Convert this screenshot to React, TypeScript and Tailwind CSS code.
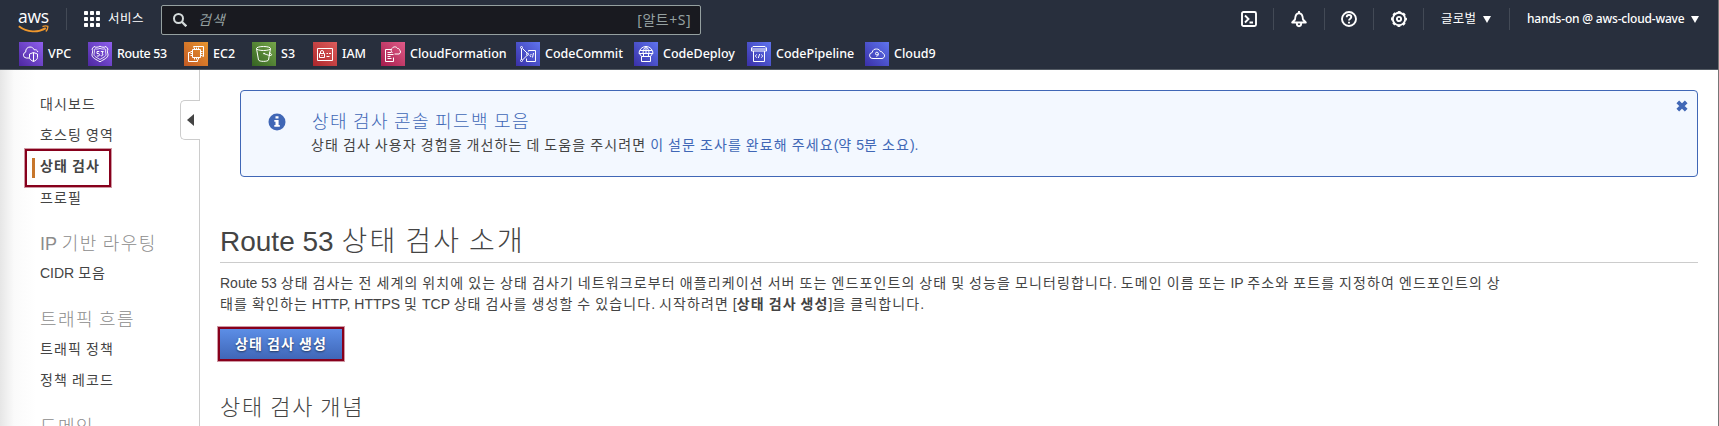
import React from "react";

const ko = "font-['Liberation_Sans','Noto_Sans_CJK_KR',sans-serif]";
const ember = "font-['Noto_Sans','Noto_Sans_CJK_KR',sans-serif]";

/** Widens Hangul runs slightly while leaving Latin text at its natural spacing. */
function Ko({ children }: { children: string }) {
  const runs = children.split(/([\uac00-\ud7a3]+)/);
  return (
    <>
      {runs.map((run, i) =>
        i % 2 === 1 ? (
          <span key={i} className="tracking-[0.08em]">
            {run}
          </span>
        ) : (
          run
        ),
      )}
    </>
  );
}

const violet = "from-[#4d27a0] to-[#8f5fee]";
const indigo = "from-[#3a2fa8] to-[#5f74ee]";

type Service = { name: string; width: string; tile: string; icon: React.ReactNode; text?: string };

const services: Service[] = [
  {
    name: "VPC",
    width: "w-[69px]",
    tile: violet,
    icon: (
      <>
        <path d="M10.500 16H7.300a3 3 0 0 1-.6-5.900C6.500 7 8.500 5 11 5c2.200 0 3.500 1.200 4.200 2.800 1.800-.4 3.300.5 3.600 2.200" />
        <path d="M14.500 10.500l4 1.500v3.500c0 1.800-1.700 3-4 4-2.300-1-4-2.200-4-4V12zM14.500 10.500v9" />
      </>
    ),
  },
  {
    name: "Route 53",
    width: "w-[96px]",
    tile: violet,
    text: "tracking-[-0.4px]",
    icon: (
      <>
        <path d="M6 4.500c2 1.200 4 .8 6-.3 2 1.100 4 1.500 6 .3l2 2.500c-1.200 2.200-.3 3.800 0 5.500.4 3.500-4.500 5-8 7.300-3.500-2.300-8.400-3.800-8-7.300.3-1.700 1.200-3.300 0-5.500z" />
        <path d="M7 6.800c1.700.6 3.400.2 5-.5 1.600.7 3.300 1.100 5 .5l.8 1c-.6 1.800 0 3 .2 4.500.2 2.400-3.500 3.500-6 5.200-2.500-1.700-6.200-2.800-6-5.200.2-1.500.8-2.700.2-4.500z" strokeWidth="0.800" />
        <path d="M11.300 9.500H9v2h1.200a1.200 1.200 0 0 1 0 2.500H8.800M12.800 9.500h2.500l-1.300 1.800a1.300 1.300 0 1 1-1.300 2.200" />
      </>
    ),
  },
  {
    name: "EC2",
    width: "w-[68px]",
    tile: "from-[#c25a24] to-[#e9962f]",
    icon: (
      <>
        <path d="M8.500 7.500h8v8h-8zM10.500 7.500v-2M12.500 7.500v-2M14.500 7.500v-2M16.500 9.500h2M16.500 11.500h2M16.500 13.500h2M10.500 15.500v2M12.500 15.500v2M14.500 15.500v2M8.500 9.500h-2M8.500 11.500h-2M8.500 13.500h-2" />
        <path d="M9.500 5.500v-1h10v10h-1M6.500 10.500h-2v9h9v-2" />
      </>
    ),
  },
  {
    name: "S3",
    width: "w-[61px]",
    tile: "from-[#356422] to-[#75a64a]",
    icon: (
      <>
        <ellipse cx="11.500" cy="6.500" rx="7" ry="2" />
        <path d="M4.500 6.500l2 11.500c.5 1.800 9.500 1.800 10 0l2-11.500M12 11.500c3 1.500 6 2.300 7.300 1.800 1-.8-.3-1.800-2.300-2.600" />
        <circle cx="12" cy="11.500" r=".5" />
      </>
    ),
  },
  {
    name: "IAM",
    width: "w-[68px]",
    tile: "from-[#ad262b] to-[#dd5c5c]",
    icon: (
      <>
        <path d="M4.500 6.500h15v12h-15zM6.500 11.500h5v4h-5zM7.500 11.500v-1.500a1.500 1.500 0 0 1 3 0v1.500M9 13v1M13.500 11.500h1.500M16 11.500h2M13.500 14.500h3" />
      </>
    ),
  },
  {
    name: "CloudFormation",
    width: "w-[135px]",
    tile: "from-[#a51a4d] to-[#e05a88]",
    icon: (
      <>
        <path d="M10.500 7.500h-6v12h8v-4M6.500 10.500h4M6.500 12.500h6M6.500 14.500h3M6.500 16.500h4" />
        <path d="M11.500 10.500a2.500 2.500 0 0 1 0-4.500c1-1.500 4-1.700 5 .5 1.500-.2 2 .8 2 1.500 1.500.8 1.300 3.500-.5 4h-4.500" />
      </>
    ),
  },
  {
    name: "CodeCommit",
    width: "w-[118px]",
    tile: indigo,
    icon: (
      <>
        <path d="M5.500 6.500v11M6.500 6.500l5 5M6.500 18l5-5" />
        <circle cx="5.500" cy="5.500" r="1" />
        <circle cx="5.500" cy="18.500" r="1" />
        <circle cx="11.500" cy="12.200" r="1" />
        <path d="M12.500 9.500v-1h7v11h-9v-3M15.500 12l-1.500 1.500 1 1.500M17.500 11l-1 4.500" />
      </>
    ),
  },
  {
    name: "CodeDeploy",
    width: "w-[113px]",
    tile: indigo,
    icon: (
      <>
        <path d="M5 11.500a7 7 0 0 1 14 0zM9 11.500c0-3.500 1.500-6 3-7 1.500 1 3 3.500 3 7M12 4.500v7M6 8.500h12" />
        <path d="M5.500 11.500l2 3M18.500 11.500l-2 3M9.500 11.500v3M14.500 11.500v3M7.500 14.500h9v5h-9z" />
      </>
    ),
  },
  {
    name: "CodePipeline",
    width: "w-[118px]",
    tile: indigo,
    icon: (
      <>
        <path d="M6 4.500h12l1.500 1.500v3h-15V6zM5 7h14M6.500 9v10.500h11V9" />
        <path d="M9.800 12.500L8.200 14l1.600 1.600M14.200 12.500l1.600 1.500-1.600 1.600M12.700 12l-1.400 4" />
      </>
    ),
  },
  {
    name: "Cloud9",
    width: "w-[80px]",
    tile: indigo,
    icon: (
      <>
        <path d="M8 16.500a3 3 0 0 1-.8-6C7.500 8 9.500 6.800 11.500 7c2 0 3.200 1 3.800 2.500 1.500-.2 2 .6 2.200 1.500 3 1 2.500 5.200-.5 5.500z" />
        <path d="M13.300 11.500a1.400 1.400 0 1 1-1.400-1.300 1.400 1.400 0 0 1 1.400 1.300c0 1.800-.6 2.700-1.800 3" />
      </>
    ),
  },
];

function AwsLogo() {
  return (
    <div className="flex w-[31px] flex-col items-center">
      <span className="mt-[4px] block h-[17px] font-['Open_Sans',sans-serif] text-[17.500px] leading-[17px] font-medium tracking-[-0.2px] text-white">
        aws
      </span>
      <svg viewBox="0 0 31 9" className="h-[9px] w-[31px]" fill="none" stroke="#f0982d">
        <path d="M.8 1.200c8.500 6.300 19 6.800 27 1.900" strokeWidth="1.900" />
        <path d="M24.500 1.600c2-.9 4-.9 5.300-.3.200 1.700-.5 3.800-2 5.200" strokeWidth="1.300" />
      </svg>
    </div>
  );
}

function Grid() {
  return (
    <svg viewBox="0 0 16 16" className="size-4" fill="#fff">
      {[0, 6, 12].map((y) =>
        [0, 6, 12].map((x) => <rect key={`${x}-${y}`} x={x} y={y} width="4" height="4" rx="0.8" />),
      )}
    </svg>
  );
}

function Caret() {
  return (
    <svg viewBox="0 0 8 7" className="h-[7px] w-[8px]" fill="#fff">
      <path d="M0 0h8L4 7z" />
    </svg>
  );
}

const tools = [
  {
    id: "shell",
    box: "w-[50px]",
    icon: (
      <>
        <rect x="1" y="1" width="14" height="14" rx="1.500" />
        <path d="M4 4.500L7.500 8 4 11.500M8.500 11.500H12" />
      </>
    ),
  },
  {
    id: "bell",
    box: "w-[51px]",
    icon: (
      <>
        <path d="M1.200 11.500L4 8.500C4.200 5 5.200 2.200 8 2.200s3.800 2.800 4 6.300l2.800 3z" strokeLinejoin="round" />
        <path d="M8 0v2.500M5.900 12v1.100a2.100 2.100 0 0 0 4.200 0V12" />
      </>
    ),
  },
  {
    id: "help",
    box: "w-[49px]",
    icon: (
      <>
        <circle cx="8" cy="8" r="7" />
        <path d="M5.700 6.200C5.700 4.800 6.700 4 8 4s2.300.8 2.300 2.100C10.300 7.700 8 7.700 8 9.500M8 10.700v1.800" />
      </>
    ),
  },
  {
    id: "settings",
    box: "w-[50px]",
    icon: (
      <>
        <circle cx="8" cy="8" r="6.200" />
        <circle cx="8" cy="8" r="7.200" strokeWidth="1.500" strokeDasharray="2.900 2.755" strokeDashoffset="1.450" />
        <circle cx="8" cy="8" r="2.100" />
      </>
    ),
  },
];

function Header() {
  return (
    <header className={`h-[70px] border-b border-[#545b64] bg-[#282f3d] text-white ${ember}`}>
      <div className="flex h-[40px] items-start">
        <div className="mt-[8px] flex h-[22px] w-[67px] justify-start border-r border-[#434a56] pl-[18px]">
          <div className="-mt-[4px]">
            <AwsLogo />
          </div>
        </div>
        <div className="flex h-[38px] w-[94px] items-center pl-[17px]">
          <Grid />
          <span className="ml-[8px] text-[12.500px] leading-[16px] tracking-[0.5px]">서비스</span>
        </div>
        <div className="mt-[5px] flex h-[30px] w-[540px] items-center rounded-[2px] border border-[#95a0a0] bg-[#191a20] pr-[9px] pl-[11px]">
          <svg viewBox="0 0 14 14" className="size-[14px]" fill="none" stroke="#d5dbdb" strokeWidth="2">
            <circle cx="5.500" cy="5.500" r="4.500" />
            <path d="M9 9l4.300 4.300" strokeWidth="2.300" />
          </svg>
          <span className="ml-[11px] flex-1 text-[14px] leading-[18px] tracking-[0.9px] text-[#95a0a0] italic">검색</span>
          <span className="text-[14px] leading-[18px] tracking-[0.5px] text-[#95a0a0]">[알트+S]</span>
        </div>
        <div className="mt-[8px] ml-auto flex h-[22px] items-center pr-[19px]">
          {tools.map((t) => (
            <div key={t.id} className={`flex h-[22px] items-center justify-center border-r border-[#434a56] ${t.box}`}>
              <svg viewBox="0 0 16 16" className="size-4 overflow-visible" fill="none" stroke="#fff" strokeWidth="1.900">
                {t.icon}
              </svg>
            </div>
          ))}
          <div className="flex h-[22px] w-[86px] items-center border-r border-[#434a56] pl-[17px] text-[12.500px] leading-[16px]">
            <span className="w-[42px] tracking-[0.3px] whitespace-nowrap">글로벌</span>
            <Caret />
          </div>
          <div className="flex h-[22px] items-center pl-[17px] text-[12px] leading-[16px] font-medium">
            <span className="w-[164px] tracking-[-0.190px] whitespace-nowrap">hands-on @ aws-cloud-wave</span>
            <Caret />
          </div>
        </div>
      </div>
      <nav className="flex pt-[2px] pl-[19px]">
        {services.map((s) => (
          <a key={s.name} className={`flex h-6 shrink-0 items-center gap-[5px] ${s.width}`}>
            <span className={`block size-6 shrink-0 bg-linear-to-tr ${s.tile}`}>
              <svg viewBox="0 0 24 24" className="size-6" fill="none" stroke="#fff" strokeWidth="1">
                {s.icon}
              </svg>
            </span>
            <span className={`text-[12.500px] leading-[16px] font-medium whitespace-nowrap ${s.text ?? ""}`}>{s.name}</span>
          </a>
        ))}
      </nav>
    </header>
  );
}

function SideLink({ children }: { children: string }) {
  return (
    <a className="block h-[31.300px] text-[14px] leading-[31px]">
      <Ko>{children}</Ko>
    </a>
  );
}

function SideHeading({ children }: { children: string }) {
  return (
    <h4 className="mt-[13px] h-[31.300px] text-[18px] leading-[34px] font-light text-[#8c8c8c]">
      <Ko>{children}</Ko>
    </h4>
  );
}

function Sidebar() {
  return (
    <aside className="relative w-[200px] shrink-0 border-r border-[#ccc] bg-linear-to-r from-[#e6e6e6] via-[#fafafa] via-[14px] to-white to-[36px] pt-[19px] pl-[40px]">
      <SideLink>대시보드</SideLink>
      <SideLink>호스팅 영역</SideLink>
      <div className="relative -top-px">
        <div className="absolute -top-[2px] -left-[15px] h-[38px] w-[86px] border-[2.500px] border-[#87001c] outline outline-[#87001c]/40" />
        <div className="absolute top-[7px] -left-[8px] h-[20px] w-[3px] bg-[#c7762b]" />
        <div className="font-bold">
          <SideLink>상태 검사</SideLink>
        </div>
      </div>
      <SideLink>프로필</SideLink>
      <SideHeading>IP 기반 라우팅</SideHeading>
      <SideLink>CIDR 모음</SideLink>
      <SideHeading>트래픽 흐름</SideHeading>
      <SideLink>트래픽 정책</SideLink>
      <SideLink>정책 레코드</SideLink>
      <SideHeading>도메인</SideHeading>
      <button className="absolute top-[30px] -right-px flex h-[40px] w-[20px] items-center rounded-l-[5px] border border-r-0 border-[#ccc] bg-white pl-[6px]">
        <svg viewBox="0 0 7 12" className="h-[12px] w-[7px]" fill="#444">
          <path d="M7 0v12L0 6z" />
        </svg>
      </button>
    </aside>
  );
}

function Notice() {
  return (
    <section className="mr-[20px] ml-[40px] flex h-[87px] rounded-[4px] border border-[#4067b6] bg-[#f3f8ff]">
      <svg viewBox="0 0 18 18" className="mt-[22px] ml-[27px] size-[18px]">
        <circle cx="9" cy="9" r="8.500" fill="#4067b6" />
        <path d="M7.500 3.200h3v2.300h-3zM6.300 7h4.300v5h1.200v1.800H6.300V12h1.200V8.800H6.300z" fill="#fff" />
      </svg>
      <div className="ml-[25px] flex-1 pt-[19px] whitespace-nowrap">
        <h2 className="pl-px text-[18px] leading-[24px] font-light text-[#4067b6]">
          <Ko>상태 검사 콘솔 피드백 모음</Ko>
        </h2>
        <p className="text-[14px] leading-[22px]">
          <Ko>상태 검사 사용자 경험을 개선하는 데 도움을 주시려면 </Ko>
          <a className="text-[#4067b6]">
            <Ko>이 설문 조사를 완료해 주세요(약 5분 소요).</Ko>
          </a>
        </p>
      </div>
      <svg viewBox="0 0 12 12" className="mt-[9px] mr-[9px] size-[12px]" stroke="#4067b6" strokeWidth="3.800">
        <path d="M1.800 1.800l8.400 8.400M10.200 1.800l-8.400 8.400" />
      </svg>
    </section>
  );
}

export default function App() {
  return (
    <div className={`flex h-[426px] w-[1719px] overflow-hidden bg-white text-[#444] ${ko}`}>
      <div className="flex min-w-0 flex-1 flex-col">
        <Header />
        <div className="flex min-h-0 flex-1">
          <Sidebar />
          <main className="min-w-0 flex-1 pt-[20px]">
            <Notice />
            <div className="mr-[20px] ml-[20px]">
              <h1 className="mt-[42px] h-[44px] border-b border-[#ccc] text-[28px] leading-[45px] font-light whitespace-nowrap">
                <Ko>Route 53 상태 검사 소개</Ko>
              </h1>
              <p className="mt-[10px] text-[14px] leading-[21px] whitespace-nowrap">
                <Ko>
                  Route 53 상태 검사는 전 세계의 위치에 있는 상태 검사기 네트워크로부터 애플리케이션 서버 또는 엔드포인트의 상태 및 성능을 모니터링합니다. 도메인 이름 또는 IP 주소와 포트를 지정하여 엔드포인트의 상
                </Ko>
                <br />
                <Ko>태를 확인하는 HTTP, HTTPS 및 TCP 상태 검사를 생성할 수 있습니다. 시작하려면 [</Ko>
                <b>
                  <Ko>상태 검사 생성</Ko>
                </b>
                <Ko>]을 클릭합니다.</Ko>
              </p>
              <button className="mt-[12px] -ml-[2px] block h-[34px] w-[126px] border-[2.500px] border-[#87001c] bg-linear-to-b from-[#5c8ee6] to-[#4067b8] text-[14px] leading-[30px] font-bold text-white outline outline-[#87001c]/40 text-shadow-[0_1px_2px_#0008]">
                <Ko>상태 검사 생성</Ko>
              </button>
              <h3 className="mt-[32px] text-[22px] leading-[30px] font-light">
                <Ko>상태 검사 개념</Ko>
              </h3>
            </div>
          </main>
        </div>
      </div>
      <div className="w-px bg-[#777]" />
    </div>
  );
}
